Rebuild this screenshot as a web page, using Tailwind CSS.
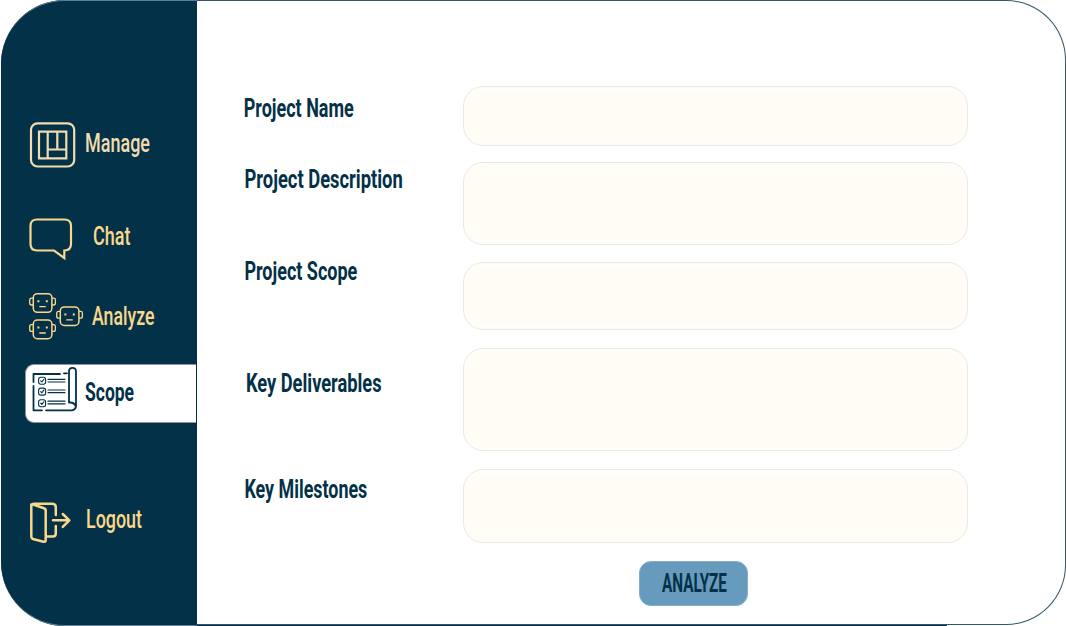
<!DOCTYPE html>
<html lang="en">
<head>
<meta charset="utf-8">
<title>Project Scope</title>
<script src="https://cdn.jsdelivr.net/npm/@tailwindcss/browser@4"></script>
</head>
<body class="bg-white w-[1066px] h-[626px] overflow-hidden font-['Roboto',sans-serif] font-bold text-[25px] leading-6 text-[#033148]">
<div class="ml-px w-[1065px] h-[626px] rounded-l-[64px] bg-[linear-gradient(90deg,#033148_946px,#fff_946px)] flex items-start">
  <nav class="w-[196px] h-[626px] shrink-0 rounded-l-[64px] bg-[#033148] border-y border-[#5e7f91] pl-6 pt-[114px] flex flex-col text-[#fbd78c] font-medium">
    <a class="h-[60px] flex items-start text-[#f0dcae]">
      <svg class="w-[60px] h-[60px] shrink-0" viewBox="25 115 60 60" fill="none" stroke="currentColor" stroke-width="2.2">
        <rect x="31" y="123.3" width="43.2" height="43.2" rx="6.5"/>
        <path d="M39 131.7H66.3V158.3H39ZM47.7 131.7V158.3M57.3 131.7V149.5M47.7 149.5H66.3"/>
      </svg>
      <span class="mt-[17px] whitespace-nowrap origin-left scale-x-[0.72]">Manage</span>
    </a>
    <a class="mt-[34px] h-[60px] flex items-start">
      <svg class="w-[60px] h-[60px] shrink-0" viewBox="25 209 60 60" fill="none" stroke="currentColor" stroke-width="2.2">
        <path d="M37 219.5H64.5Q71 219.5 71 226V244Q71 250.5 64.3 250.5V258L54 250.5H37Q30.5 250.5 30.5 244V226Q30.5 219.5 37 219.5Z"/>
      </svg>
      <span class="mt-4 ml-[7.5px] whitespace-nowrap origin-left scale-x-[0.72]">Chat</span>
    </a>
    <a class="mt-[17px] h-[60px] flex items-start">
      <svg class="w-[60px] h-[60px] shrink-0" viewBox="25 286 60 60" fill="none" stroke="currentColor" stroke-width="1.5">
        <defs>
          <g id="bot">
            <rect x="4.3" y="0.7" width="18.6" height="18.6" rx="4"/>
            <path d="M4 5.2H2.6Q.7 5.2 .7 7V10Q.7 12 2.6 12H4M23 5.2H24.6Q26.4 5.2 26.4 7V10Q26.4 12 24.6 12H23M10.3 13.6H16.8" stroke-width="1.3"/>
            <path d="M9.4 7.2V9.2M17.8 7.2V9.2" stroke-width="2"/>
          </g>
        </defs>
        <use href="#bot" x="29" y="293"/>
        <use href="#bot" x="56" y="306.2"/>
        <use href="#bot" x="29" y="319.4"/>
      </svg>
      <span class="mt-[19px] ml-[7px] whitespace-nowrap origin-left scale-x-[0.71]">Analyze</span>
    </a>
    <a class="mt-[18px] h-[59px] rounded-l-[9px] border-y border-l border-[#8b95a8] mr-px bg-white text-[#033148] font-bold flex items-start">
      <svg class="w-[59px] h-[57px] shrink-0" viewBox="26 365 59 57" fill="none" stroke="currentColor" stroke-width="1.8" stroke-linecap="round" stroke-linejoin="round">
        <path d="M33.5 382V374H60M64 373.3H67M33.5 386V410.3H42M46 410.3H71.5Q76 410 76 405.5V371.5Q76 367.8 72.5 367.8Q69 367.8 69 371.5V402.5M70 402.5Q74.8 402.5 76 407"/>
        <path d="M48 379.3H65M48 382H65M48 390H65M48 392.6H65M48 401.2H65M48 403.8H65" stroke-width="1.2"/>
        <g stroke-width="1.1">
          <rect x="38.6" y="377.3" width="7" height="7" rx="2.2"/>
          <rect x="38.6" y="388.1" width="7" height="7" rx="2.2"/>
          <rect x="38.6" y="399.7" width="7" height="7" rx="2.2"/>
          <path d="M40.7 380.8L41.8 382L43.8 379.4M40.7 391.6L41.8 392.8L43.8 390.2M40.7 403.2L41.8 404.4L43.8 401.8"/>
        </g>
      </svg>
      <span class="mt-4 whitespace-nowrap origin-left scale-x-[0.70]">Scope</span>
    </a>
    <a class="mt-[70px] h-[60px] flex items-start">
      <svg class="w-[60px] h-[60px] shrink-0" viewBox="25 493 60 60" fill="none" stroke="currentColor" stroke-width="2.5" stroke-linecap="round" stroke-linejoin="round">
        <path d="M31.3 504.5V536.5Q31.3 538.4 33 539L43.5 541.7Q45.7 542 45.7 540V510.5Q45.7 508.7 44 508.2L32.5 504.3Q32.5 503.7 34 503.7H52Q55.8 503.7 55.8 507V515M55.8 526V533.5Q55.8 536.5 53 536.5H46M53 520.3H69M62.8 514L69.3 520.3L62.8 526.8"/>
      </svg>
      <span class="mt-[15px] ml-px whitespace-nowrap origin-left scale-x-[0.715]">Logout</span>
    </a>
  </nav>
  <main class="w-[869px] h-[625px] bg-white border-t border-r border-b border-[#33546a] rounded-r-[60px] pl-[46px] pt-[84.5px] flex flex-col">
    <div class="flex items-start h-[60px]">
      <label class="w-[220px] shrink-0 mt-[11px] pl-px whitespace-nowrap origin-left scale-x-[0.72]">Project Name</label>
      <div class="w-[505px] h-full rounded-[20px] border border-[#e9e9e6] bg-[#fffdf6]"></div>
    </div>
    <div class="flex items-start h-[83px] mt-[16.5px]">
      <label class="w-[220px] shrink-0 mt-[6px] pl-[2px] whitespace-nowrap origin-left scale-x-[0.735]">Project Description</label>
      <div class="w-[505px] h-full rounded-[20px] border border-[#e9e9e6] bg-[#fffdf6]"></div>
    </div>
    <div class="flex items-start h-[68px] mt-[17px]">
      <label class="w-[220px] shrink-0 -mt-[2px] pl-[2px] whitespace-nowrap origin-left scale-x-[0.72]">Project Scope</label>
      <div class="w-[505px] h-full rounded-[20px] border border-[#e9e9e6] bg-[#fffdf6]"></div>
    </div>
    <div class="flex items-start h-[103px] mt-[18px]">
      <label class="w-[220px] shrink-0 mt-[24px] pl-[4px] whitespace-nowrap origin-left scale-x-[0.73]">Key Deliverables</label>
      <div class="w-[505px] h-full rounded-[20px] border border-[#e9e9e6] bg-[#fffdf6]"></div>
    </div>
    <div class="flex items-start h-[74px] mt-[18px]">
      <label class="w-[220px] shrink-0 mt-[9px] pl-[2px] whitespace-nowrap origin-left scale-x-[0.715]">Key Milestones</label>
      <div class="w-[505px] h-full rounded-[20px] border border-[#e9e9e6] bg-[#fffdf6]"></div>
    </div>
    <button class="ml-[396px] mt-[18px] w-[109px] h-[45px] rounded-xl border border-[#85aecb] bg-[#669bbe] flex items-start justify-start pl-[22px] pt-[10px] font-bold">
      <span class="whitespace-nowrap origin-left scale-x-[0.61]">ANALYZE</span>
    </button>
  </main>
</div>
</body>
</html>
